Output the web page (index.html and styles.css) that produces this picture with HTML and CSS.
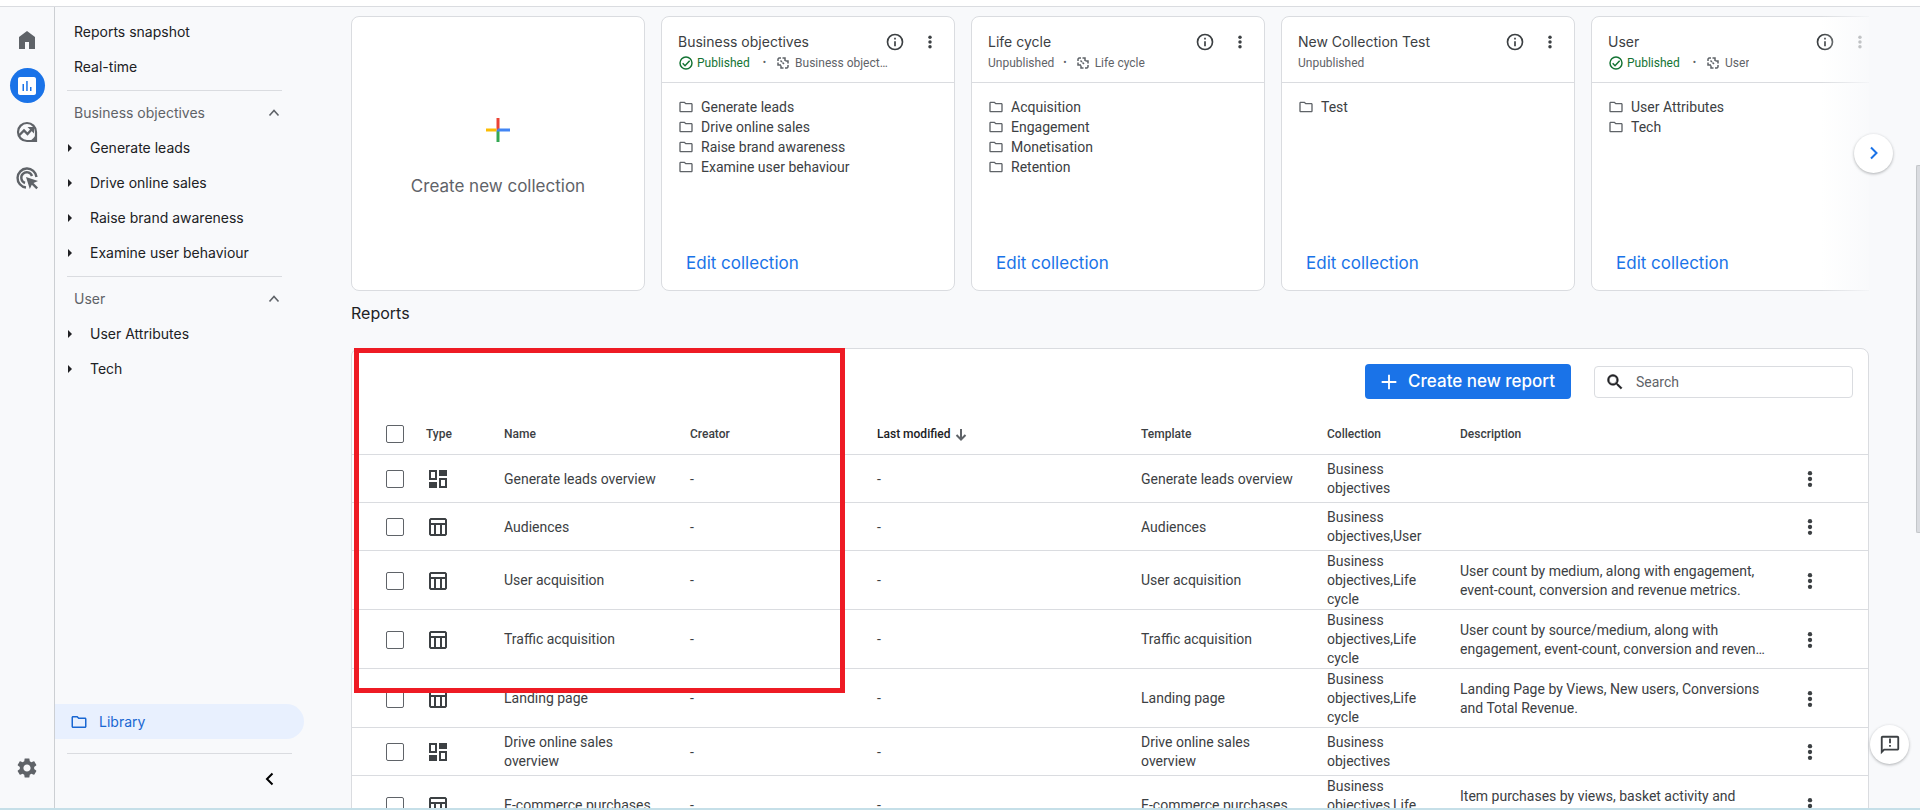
FILE: index.html
```html
<!DOCTYPE html>
<html lang="en-GB">
<head>
<meta charset="utf-8">
<title>Library</title>
<link rel="stylesheet" href="styles.css">
</head>
<body>
<svg class="sprite" aria-hidden="true">
  <symbol id="home" viewBox="0 0 24 24"><path d="M4 21V9l8-6 8 6v12h-6v-7h-4v7H4Z"/></symbol>
  <symbol id="bars" viewBox="0 0 24 24"><path fill-rule="evenodd" d="M19 3H5c-1.100 0-2 .9-2 2v14c0 1.100.9 2 2 2h14c1.100 0 2-.9 2-2V5c0-1.100-.9-2-2-2ZM9 17H7.500v-7H9v7Zm3.700 0h-1.500V7h1.500v10Zm3.800 0H15v-4h1.500v4Z"/></symbol>
  <symbol id="explore" viewBox="0 0 24 24"><path fill="none" stroke="currentColor" stroke-width="2.200" d="M12 3a9 9 0 1 0 0 18h9v-9a9 9 0 0 0-9-9Z"/><path d="M21 14v7h-7c3-1 6-4 7-7Z"/><path fill="none" stroke="currentColor" stroke-width="2.400" d="m4 15.500 5-5 3.500 3.500 5-5.500"/><path d="M12.500 7H19v6.500Z"/></symbol>
  <symbol id="ads" viewBox="0 0 24 24"><path fill="none" stroke="currentColor" stroke-width="2.400" d="M11 21.500A9.500 9.500 0 1 1 21.500 11M10 17a5.500 5.500 0 1 1 7-7"/><path d="m11 11 12 4-4.500 2 4.500 4.500-1.700 1.700-4.500-4.500-2 4.300Z"/></symbol>
  <symbol id="gear" viewBox="0 0 24 24"><path d="M19.140 12.940c.04-.3.060-.61.060-.94 0-.32-.02-.64-.07-.94l2.030-1.580c.18-.14.230-.41.120-.61l-1.920-3.320c-.12-.22-.37-.29-.59-.22l-2.390.96c-.5-.38-1.030-.7-1.620-.94l-.36-2.540c-.04-.24-.24-.41-.48-.41h-3.840c-.24 0-.43.170-.47.410l-.36 2.540c-.59.240-1.130.570-1.620.940l-2.390-.96c-.22-.08-.47 0-.59.220L2.740 8.870c-.12.210-.08.470.120.610l2.030 1.580c-.05.300-.09.630-.09.940s.02.640.070.940l-2.030 1.580c-.18.140-.23.410-.12.610l1.920 3.320c.12.220.37.290.59.220l2.390-.96c.5.380 1.030.7 1.620.940l.36 2.540c.05.240.24.410.48.410h3.840c.24 0 .44-.17.470-.41l.36-2.540c.59-.24 1.130-.56 1.620-.94l2.390.96c.22.080.47 0 .59-.22l1.920-3.320c.12-.22.070-.47-.12-.61l-2.010-1.580ZM12 15.600c-1.980 0-3.600-1.620-3.600-3.600s1.620-3.600 3.600-3.600 3.600 1.620 3.600 3.600-1.620 3.600-3.600 3.600Z"/></symbol>
  <symbol id="up" viewBox="0 0 12 12"><path fill="none" stroke="currentColor" stroke-width="1.600" d="m1.500 8.500 4.500-5 4.500 5"/></symbol>
  <symbol id="left" viewBox="0 0 12 14"><path fill="none" stroke="currentColor" stroke-width="2" d="M9.500 1.500 4 7l5.500 5.500"/></symbol>
  <symbol id="right" viewBox="0 0 12 14"><path fill="none" stroke="currentColor" stroke-width="2" d="M3 1.500 8.500 7 3 12.500"/></symbol>
  <symbol id="caret" viewBox="0 0 6 8"><path d="M1 0v8l4-4Z"/></symbol>
  <symbol id="folder" viewBox="0 0 24 24"><path d="M9.170 6l2 2H20v10H4V6h5.170M10 4H4c-1.100 0-2 .9-2 2v12c0 1.100.9 2 2 2h16c1.100 0 2-.9 2-2V8c0-1.100-.9-2-2-2h-8l-2-2Z"/></symbol>
  <symbol id="info" viewBox="0 0 24 24"><path d="M11 7h2v2h-2V7Zm0 4h2v6h-2v-6Zm1-9a10 10 0 1 0 0 20 10 10 0 0 0 0-20Zm0 18a8 8 0 1 1 0-16 8 8 0 0 1 0 16Z"/></symbol>
  <symbol id="more" viewBox="0 0 24 24"><circle cx="12" cy="5" r="2.600"/><circle cx="12" cy="12" r="2.600"/><circle cx="12" cy="19" r="2.600"/></symbol>
  <symbol id="check" viewBox="0 0 24 24"><circle cx="12" cy="12" r="9" fill="none" stroke="currentColor" stroke-width="2.200"/><path fill="none" stroke="currentColor" stroke-width="2.200" d="m7 12.500 3.500 3.500 7-7.500"/></symbol>
  <symbol id="link" viewBox="0 0 14 14"><path fill="none" stroke="currentColor" stroke-width="1.500" d="M2 5V3l1-1h2M6.500 2H9v3M2 6.500V9h3M12 9v2l-1 1H9M7.500 12H5V9.500M12 7.500V5H9.500M4.500 4.500l1.500 1.500M6.500 6.500l1.500 1.500"/></symbol>
  <symbol id="plus" viewBox="0 0 24 24"><path d="M11 4h2v7h7v2h-7v7h-2v-7H4v-2h7Z"/></symbol>
  <symbol id="search" viewBox="0 0 24 24"><path stroke="currentColor" stroke-width=".6" d="M15.500 14h-.79l-.28-.27A6.470 6.470 0 0 0 16 9.500 6.500 6.500 0 1 0 9.500 16c1.610 0 3.090-.59 4.230-1.570l.27.280v.79l5 4.990L20.490 19l-4.990-5Zm-6 0a4.500 4.500 0 1 1 0-9 4.500 4.500 0 0 1 0 9Z"/></symbol>
  <symbol id="down" viewBox="0 0 12 12"><path fill="none" stroke="currentColor" stroke-width="2" d="M6 0v10.500M1.500 6 6 10.500 10.500 6"/></symbol>
  <symbol id="overview" viewBox="0 0 18 18"><path fill-rule="evenodd" d="M0 0h8v10H0ZM2 2v6h4V2ZM10 0h8v6h-8ZM0 12h8v6H0ZM10 8h8v10h-8Zm2 2v6h4v-6Z"/></symbol>
  <symbol id="detail" viewBox="0 0 18 18"><path fill-rule="evenodd" d="M1.500 0h15L18 1.500v15L16.500 18h-15L0 16.500v-15ZM2 2v3h14V2ZM2 7v9h3V7Zm5 0v9h4V7Zm6 0v9h3V7Z"/></symbol>
  <symbol id="feedback" viewBox="0 0 24 24"><path d="M20 2H4c-1.100 0-2 .9-2 2v18l4-4h14c1.100 0 2-.9 2-2V4c0-1.100-.9-2-2-2Zm0 14H5.200L4 17.200V4h16v12ZM11 5h2v5h-2V5Zm0 7h2v2h-2v-2Z"/></symbol>
</svg>

<div class="app">
  <nav class="rail" aria-label="Sections">
    <a class="rail-link" href="#" aria-label="Home"><svg class="i24"><use href="#home"/></svg></a>
    <a class="rail-link active" href="#" aria-label="Reports"><svg class="i24"><use href="#bars"/></svg></a>
    <a class="rail-link" href="#" aria-label="Explore"><svg class="i24"><use href="#explore"/></svg></a>
    <a class="rail-link" href="#" aria-label="Advertising"><svg class="i24"><use href="#ads"/></svg></a>
    <a class="rail-link settings" href="#" aria-label="Admin"><svg class="i24"><use href="#gear"/></svg></a>
  </nav>

  <nav class="sidebar" aria-label="Reports">
    <a class="side-link" href="#">Reports snapshot</a>
    <a class="side-link" href="#">Real-time</a>
    <section class="group">
      <button class="group-head">Business objectives<svg class="i12"><use href="#up"/></svg></button>
      <a class="side-item" href="#"><svg class="caret"><use href="#caret"/></svg>Generate leads</a>
      <a class="side-item" href="#"><svg class="caret"><use href="#caret"/></svg>Drive online sales</a>
      <a class="side-item" href="#"><svg class="caret"><use href="#caret"/></svg>Raise brand awareness</a>
      <a class="side-item" href="#"><svg class="caret"><use href="#caret"/></svg>Examine user behaviour</a>
    </section>
    <section class="group">
      <button class="group-head">User<svg class="i12"><use href="#up"/></svg></button>
      <a class="side-item" href="#"><svg class="caret"><use href="#caret"/></svg>User Attributes</a>
      <a class="side-item" href="#"><svg class="caret"><use href="#caret"/></svg>Tech</a>
    </section>
    <a class="library" href="#"><svg class="i18"><use href="#folder"/></svg>Library</a>
    <div class="side-foot"><button class="plain" aria-label="Collapse"><svg class="chev"><use href="#left"/></svg></button></div>
  </nav>

  <main class="main">
    <div class="carousel">
      <div class="cards">
        <button class="card create">
          <svg class="gplus" viewBox="0 0 24 24"><path fill="#ea4335" d="M10.500 0h3v12h-3z"/><path fill="#34a853" d="M10.500 12h3v12h-3z"/><path fill="#fbbc04" d="M0 10.500h10.500v3H0z"/><path fill="#4285f4" d="M12 10.500h12v3H10.500z"/></svg>
          <span>Create new collection</span>
        </button>
        <article class="card">
          <header class="card-head">
            <div class="card-title"><h3>Business objectives</h3><button class="plain" aria-label="Info"><svg class="i20"><use href="#info"/></svg></button><button class="plain" aria-label="More"><svg class="i16"><use href="#more"/></svg></button></div>
            <p class="status"><span class="published"><svg class="i16"><use href="#check"/></svg>Published</span><span class="dot">•</span><svg class="i14"><use href="#link"/></svg><span class="linked">Business objectives</span></p>
          </header>
          <ul class="topics">
            <li><svg class="i16"><use href="#folder"/></svg>Generate leads</li>
            <li><svg class="i16"><use href="#folder"/></svg>Drive online sales</li>
            <li><svg class="i16"><use href="#folder"/></svg>Raise brand awareness</li>
            <li><svg class="i16"><use href="#folder"/></svg>Examine user behaviour</li>
          </ul>
          <a class="edit" href="#">Edit collection</a>
        </article>
        <article class="card">
          <header class="card-head">
            <div class="card-title"><h3>Life cycle</h3><button class="plain" aria-label="Info"><svg class="i20"><use href="#info"/></svg></button><button class="plain" aria-label="More"><svg class="i16"><use href="#more"/></svg></button></div>
            <p class="status"><span>Unpublished</span><span class="dot near">•</span><svg class="i14"><use href="#link"/></svg><span class="linked">Life cycle</span></p>
          </header>
          <ul class="topics">
            <li><svg class="i16"><use href="#folder"/></svg>Acquisition</li>
            <li><svg class="i16"><use href="#folder"/></svg>Engagement</li>
            <li><svg class="i16"><use href="#folder"/></svg>Monetisation</li>
            <li><svg class="i16"><use href="#folder"/></svg>Retention</li>
          </ul>
          <a class="edit" href="#">Edit collection</a>
        </article>
        <article class="card">
          <header class="card-head">
            <div class="card-title"><h3>New Collection Test</h3><button class="plain" aria-label="Info"><svg class="i20"><use href="#info"/></svg></button><button class="plain" aria-label="More"><svg class="i16"><use href="#more"/></svg></button></div>
            <p class="status"><span>Unpublished</span></p>
          </header>
          <ul class="topics">
            <li><svg class="i16"><use href="#folder"/></svg>Test</li>
          </ul>
          <a class="edit" href="#">Edit collection</a>
        </article>
        <article class="card">
          <header class="card-head">
            <div class="card-title"><h3>User</h3><button class="plain" aria-label="Info"><svg class="i20"><use href="#info"/></svg></button><button class="plain" aria-label="More"><svg class="i16"><use href="#more"/></svg></button></div>
            <p class="status"><span class="published"><svg class="i16"><use href="#check"/></svg>Published</span><span class="dot">•</span><svg class="i14"><use href="#link"/></svg><span class="linked">User</span></p>
          </header>
          <ul class="topics">
            <li><svg class="i16"><use href="#folder"/></svg>User Attributes</li>
            <li><svg class="i16"><use href="#folder"/></svg>Tech</li>
          </ul>
          <a class="edit" href="#">Edit collection</a>
        </article>
      </div>
      <button class="round next" aria-label="Next"><svg class="chev"><use href="#right"/></svg></button>
    </div>

    <h2 class="heading">Reports</h2>

    <section class="panel">
      <div class="toolbar">
        <button class="primary"><svg class="i22"><use href="#plus"/></svg>Create new report</button>
        <label class="search"><svg class="i20"><use href="#search"/></svg><input type="search" placeholder="Search" aria-label="Search"></label>
      </div>
      <table class="reports">
        <colgroup><col class="c-check"><col class="c-type"><col class="c-name"><col class="c-creator"><col class="c-modified"><col class="c-name"><col class="c-collection"><col><col class="c-more"></colgroup>
        <thead>
          <tr><th class="pick"><input type="checkbox" aria-label="Select all"></th><th>Type</th><th>Name</th><th>Creator</th><th class="sorted">Last modified<svg class="i12"><use href="#down"/></svg></th><th>Template</th><th>Collection</th><th>Description</th><th></th></tr>
        </thead>
        <tbody>
          <tr><td class="pick"><input type="checkbox" aria-label="Generate leads overview"></td><td><svg class="type"><use href="#overview"/></svg></td><td>Generate leads overview</td><td>-</td><td>-</td><td>Generate leads overview</td><td>Business objectives</td><td></td><td><button class="plain" aria-label="More"><svg class="i20"><use href="#more"/></svg></button></td></tr>
          <tr><td class="pick"><input type="checkbox" aria-label="Audiences"></td><td><svg class="type"><use href="#detail"/></svg></td><td>Audiences</td><td>-</td><td>-</td><td>Audiences</td><td>Business objectives,User</td><td></td><td><button class="plain" aria-label="More"><svg class="i20"><use href="#more"/></svg></button></td></tr>
          <tr><td class="pick"><input type="checkbox" aria-label="User acquisition"></td><td><svg class="type"><use href="#detail"/></svg></td><td>User acquisition</td><td>-</td><td>-</td><td>User acquisition</td><td>Business objectives,Life cycle</td><td><p class="desc">User count by medium, along with engagement, event-count, conversion and revenue metrics.</p></td><td><button class="plain" aria-label="More"><svg class="i20"><use href="#more"/></svg></button></td></tr>
          <tr><td class="pick"><input type="checkbox" aria-label="Traffic acquisition"></td><td><svg class="type"><use href="#detail"/></svg></td><td>Traffic acquisition</td><td>-</td><td>-</td><td>Traffic acquisition</td><td>Business objectives,Life cycle</td><td><p class="desc">User count by source/medium, along with engagement, event-count, conversion and revenue metrics.</p></td><td><button class="plain" aria-label="More"><svg class="i20"><use href="#more"/></svg></button></td></tr>
          <tr><td class="pick"><input type="checkbox" aria-label="Landing page"></td><td><svg class="type"><use href="#detail"/></svg></td><td>Landing page</td><td>-</td><td>-</td><td>Landing page</td><td>Business objectives,Life cycle</td><td><p class="desc">Landing Page by Views, New users, Conversions and Total Revenue.</p></td><td><button class="plain" aria-label="More"><svg class="i20"><use href="#more"/></svg></button></td></tr>
          <tr><td class="pick"><input type="checkbox" aria-label="Drive online sales overview"></td><td><svg class="type"><use href="#overview"/></svg></td><td>Drive online sales overview</td><td>-</td><td>-</td><td>Drive online sales overview</td><td>Business objectives</td><td></td><td><button class="plain" aria-label="More"><svg class="i20"><use href="#more"/></svg></button></td></tr>
          <tr><td class="pick"><input type="checkbox" aria-label="E-commerce purchases"></td><td><svg class="type"><use href="#detail"/></svg></td><td>E-commerce purchases</td><td>-</td><td>-</td><td>E-commerce purchases</td><td>Business objectives,Life cycle</td><td><p class="desc">Item purchases by views, basket activity and more.</p></td><td><button class="plain" aria-label="More"><svg class="i20"><use href="#more"/></svg></button></td></tr>
        </tbody>
      </table>
      <div class="highlight"></div>
    </section>
  </main>
</div>
<button class="round feedback" aria-label="Send feedback"><svg class="i22"><use href="#feedback"/></svg></button>
<div class="scroll-thumb"></div>
</body>
</html>
```
FILE: styles.css
```css
* { box-sizing: border-box; }
body {
  margin: 0;
  height: 100vh;
  padding-top: 6px;
  display: flex;
  flex-direction: column;
  overflow: hidden;
  position: relative;
  background: #fff;
  color: #3c4043;
  font: 14px/20px Roboto, sans-serif;
}
h2, h3, p, ul { margin: 0; padding: 0; font-weight: 400; list-style: none; }
a { color: inherit; text-decoration: none; }
button { font: inherit; color: inherit; border: 0; background: none; padding: 0; cursor: pointer; }
svg { fill: currentColor; flex: none; display: block; }
.plain { display: block; }
.sprite { position: absolute; width: 0; height: 0; }
.i12 { width: 12px; height: 12px; }
.i14 { width: 14px; height: 14px; }
.i16 { width: 16px; height: 16px; }
.i18 { width: 18px; height: 18px; }
.i20 { width: 20px; height: 20px; }
.i22 { width: 22px; height: 22px; }
.i24 { width: 24px; height: 24px; }
.chev { width: 12px; height: 14px; }
.caret { width: 6px; height: 8px; }

.app {
  flex: 1;
  min-height: 0;
  display: flex;
  overflow: hidden;
  background: #f8f9fb;
  border-top: 1px solid #dadce0;
  border-bottom: 2px solid #c5dfe8;
}

.rail {
  width: 55px;
  flex: none;
  display: flex;
  flex-direction: column;
  align-items: center;
  gap: 11px;
  padding: 15px 0 23px;
  border-right: 1px solid #cccfd3;
  color: #5f6368;
}
.rail-link { width: 35px; height: 35px; border-radius: 50%; display: grid; place-items: center; }
.rail-link.active { background: #1a73e8; color: #fff; }
.rail-link.settings { margin-top: auto; }

.sidebar {
  width: 249px;
  flex: none;
  display: flex;
  flex-direction: column;
  padding: 7px 0 16px;
  color: #202124;
  font-family: Inter, sans-serif;
}
.side-link { padding: 0 19px; line-height: 35px; }
.group { margin: 6px 22px 0 12px; border-top: 1px solid #dadce0; padding-top: 4px; }
.group-head {
  width: 100%;
  display: flex;
  justify-content: space-between;
  align-items: center;
  padding: 0 2px 0 7px;
  line-height: 35px;
  color: #5f6368;
}
.side-item { display: flex; align-items: center; gap: 17px; line-height: 35px; }
.library {
  margin-top: auto;
  display: flex;
  align-items: center;
  gap: 11px;
  padding-left: 15px;
  line-height: 35px;
  color: #1967d2;
  background: #e8f0fe;
  border-radius: 0 18px 18px 0;
}
.side-foot {
  margin: 14px 12px 0;
  padding: 18px 17px 6px 0;
  border-top: 1px solid #dadce0;
  display: flex;
  justify-content: flex-end;
  color: #000;
}

.main { flex: 1; min-width: 0; padding: 9px 51px 0 47px; }
.carousel { position: relative; }
.cards { display: flex; gap: 16px; overflow: hidden; }
.carousel::after {
  content: "";
  position: absolute;
  inset: 0 0 0 auto;
  width: 48px;
  background: linear-gradient(to right, #f8f9fb00, #f8f9fbdd);
  pointer-events: none;
}
.card {
  flex: 0 0 294px;
  min-height: 275px;
  display: flex;
  flex-direction: column;
  background: #fff;
  border: 1px solid #dadce0;
  border-radius: 8px;
}
.create {
  align-items: center;
  justify-content: center;
  gap: 34px;
  padding-top: 6px;
  font: 17px/20px Inter, sans-serif;
  color: #5f6368;
}
.gplus { width: 24px; height: 24px; }
.card-head { padding: 15px 16px 8px; border-bottom: 1px solid #dadce0; }
.card-title { display: flex; align-items: center; gap: 17px; }
.card-title h3 { flex: 1; font: 14px/20px Inter, sans-serif; }
.status { display: flex; align-items: center; margin-top: 1px; padding-bottom: 1px; font-size: 12px; color: #5f6368; }
.published { display: flex; align-items: center; gap: 3px; color: #137333; }
.dot { margin: 0 10px 0 13px; font-size: 10px; }
.dot.near { margin: 0 9px; }
.linked { margin-left: 5px; max-width: 95px; overflow: hidden; text-overflow: ellipsis; white-space: nowrap; }
.topics { padding: 14px 16px; }
.topics li { display: flex; align-items: center; gap: 7px; }
.topics svg { color: #5f6368; }
.edit { margin: auto 24px 17px; font: 17px/20px Inter, sans-serif; color: #1a73e8; }
.round {
  width: 39px;
  height: 39px;
  border-radius: 50%;
  display: grid;
  place-items: center;
  background: #fff;
  box-shadow: 0 1px 3px #3c404366;
}
.next { position: absolute; z-index: 1; right: -24px; top: calc(50% - 20px); color: #1a73e8; }
.feedback { position: absolute; right: 11px; bottom: 46px; }
.scroll-thumb {
  position: absolute;
  right: 0;
  top: 165px;
  width: 4px;
  height: 368px;
  background: #dadce0;
  border: 1px solid #c4c7ca;
  border-right: 0;
  border-radius: 2px 0 0 2px;
}

.heading { margin: 12px 0 25px; font: 16px/20px Inter, sans-serif; color: #202124; }
.panel { position: relative; background: #fff; border: 1px solid #dadce0; border-radius: 8px; }
.toolbar { display: flex; justify-content: flex-end; align-items: center; gap: 23px; padding: 15px 15px 14px; }
.primary {
  display: flex;
  align-items: center;
  gap: 8px;
  padding: 0 16px 0 13px;
  font: 500 17px/35px Inter, sans-serif;
  color: #fff;
  background: #1a73e8;
  border-radius: 4px;
}
.search {
  width: 259px;
  display: flex;
  align-items: center;
  gap: 11px;
  padding: 5px 10px;
  border: 1px solid #dadce0;
  border-radius: 4px;
  color: #202124;
}
.search input { flex: 1; min-width: 0; border: 0; padding: 0; outline: 0; background: none; font: inherit; }
.search input::placeholder { color: #5f6368; opacity: 1; }

.reports { width: 100%; table-layout: fixed; border-spacing: 0; line-height: 19px; }
.c-check { width: 74px; }
.c-type { width: 78px; }
.c-name { width: 186px; }
.c-creator { width: 187px; }
.c-modified { width: 264px; }
.c-collection { width: 133px; }
.c-more { width: 68px; }
.reports th, .reports td {
  height: 48px;
  padding: 1px 24px 0 0;
  border-bottom: 1px solid #dadce0;
  text-align: left;
  vertical-align: middle;
}
.reports th { height: 42px; font-size: 12px; font-weight: 500; }
.reports .pick { padding-left: 34px; padding-right: 0; }
.reports .sorted { color: #202124; }
.sorted svg { display: inline-block; margin-left: 5px; vertical-align: -3px; color: #5f6368; }
.pick input {
  appearance: none;
  display: block;
  width: 18px;
  height: 18px;
  margin: 0;
  border: 1px solid #5f6368;
  border-radius: 2px;
  background: #fff;
}
.type { width: 18px; height: 18px; margin-left: 3px; }
.desc {
  max-width: 312px;
  display: -webkit-box;
  -webkit-box-orient: vertical;
  -webkit-line-clamp: 2;
  overflow: hidden;
}
.highlight { position: absolute; left: 2px; top: -1px; width: 491px; height: 345px; border: 5px solid #ee1b24; }
```
